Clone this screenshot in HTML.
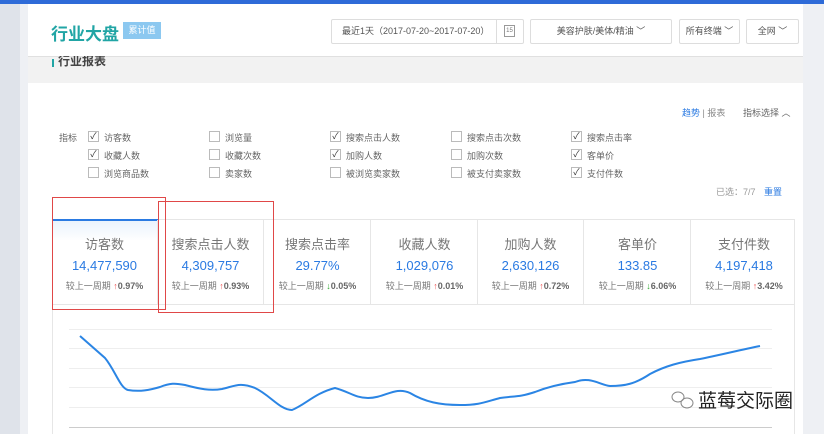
<!DOCTYPE html>
<html><head><meta charset="utf-8"><style>
*{margin:0;padding:0;box-sizing:border-box}
body{width:824px;height:434px;overflow:hidden;background:#fff;font-family:"Liberation Sans","Noto Sans CJK SC",sans-serif;position:relative;color:#666}
.a{position:absolute}
.cb{position:absolute;width:11px;height:11px;border:1px solid #bbb;background:#fff;font-size:9px;line-height:9px;text-align:center;color:#333}
.lb{position:absolute;font-size:9px;color:#666}
.card{position:absolute;top:220px;width:106px;height:84px;border-right:1px solid #e6e6e6;text-align:center}
.card .t{font-size:13px;color:#777;margin-top:14px}
.card .v{font-size:13px;color:#2a7ae2;margin-top:5px}
.card .c{font-size:9px;color:#777;margin-top:6px;white-space:nowrap}
.card .c b{color:#666}
.up{color:#e55;font-weight:bold}.dn{color:#3a3;font-weight:bold}
.sel{position:absolute;top:19px;height:25px;border:1px solid #ddd;border-radius:2px;font-size:9px;color:#555;line-height:23px;text-align:center;background:#fff}
</style></head><body>
<div class="a" style="left:0;top:0;width:20px;height:434px;background:#dfe3ea"></div>
<div class="a" style="left:20px;top:0;width:8px;height:434px;background:#eef0f4"></div>
<div class="a" style="left:803px;top:0;width:21px;height:434px;background:#eef0f4"></div>
<div class="a" style="left:0;top:0;width:824px;height:4px;background:#2e6bd8"></div>
<div class="a" style="left:28px;top:56px;width:775px;height:27px;background:#f2f2f2;border-top:1px solid #e0e0e0"></div>
<div class="a" style="left:52px;top:59px;width:2px;height:8px;background:#21a5a5"></div>
<div class="a" style="left:58px;top:52px;font-size:12px;color:#444;font-weight:bold">行业报表</div>
<div class="a" style="left:28px;top:4px;width:775px;height:52px;background:#fff"></div>
<div class="a" style="left:51px;top:20px;font-size:17px;color:#21a5a5;font-weight:bold">行业大盘</div>
<div class="a" style="left:118px;top:26px;width:0;height:0;border:5px solid transparent;border-right-color:#8cc8f0"></div>
<div class="a" style="left:123px;top:22px;width:38px;height:17px;background:#8cc8f0;color:#fff;font-size:9px;line-height:17px;text-align:center">累计值</div>
<div class="sel" style="left:331px;width:193px;text-align:left;padding-left:10px">最近1天（2017-07-20~2017-07-20）</div>
<div class="a" style="left:496px;top:19px;width:28px;height:25px;border-left:1px solid #ddd"></div>
<div class="a" style="left:504px;top:25px;width:11px;height:12px;border:1px solid #999;font-size:6px;line-height:10px;text-align:center;color:#777">15</div>
<div class="sel" style="left:530px;width:142px">美容护肤/美体/精油 ﹀</div>
<div class="sel" style="left:679px;width:61px">所有终端 ﹀</div>
<div class="sel" style="left:746px;width:53px">全网 ﹀</div>
<div class="a" style="left:682px;top:106px;font-size:9px;color:#2a7ae2">趋势 <span style="color:#888">| 报表</span></div>
<div class="a" style="left:743px;top:106px;font-size:9px;color:#666">指标选择 ︿</div>
<div class="lb" style="left:59px;top:131px">指标</div>
<div class="cb" style="left:88px;top:131px">✓</div><div class="lb" style="left:104px;top:131px">访客数</div>
<div class="cb" style="left:88px;top:149px">✓</div><div class="lb" style="left:104px;top:149px">收藏人数</div>
<div class="cb" style="left:88px;top:167px"></div><div class="lb" style="left:104px;top:167px">浏览商品数</div>
<div class="cb" style="left:209px;top:131px"></div><div class="lb" style="left:225px;top:131px">浏览量</div>
<div class="cb" style="left:209px;top:149px"></div><div class="lb" style="left:225px;top:149px">收藏次数</div>
<div class="cb" style="left:209px;top:167px"></div><div class="lb" style="left:225px;top:167px">卖家数</div>
<div class="cb" style="left:330px;top:131px">✓</div><div class="lb" style="left:346px;top:131px">搜索点击人数</div>
<div class="cb" style="left:330px;top:149px">✓</div><div class="lb" style="left:346px;top:149px">加购人数</div>
<div class="cb" style="left:330px;top:167px"></div><div class="lb" style="left:346px;top:167px">被浏览卖家数</div>
<div class="cb" style="left:451px;top:131px"></div><div class="lb" style="left:467px;top:131px">搜索点击次数</div>
<div class="cb" style="left:451px;top:149px"></div><div class="lb" style="left:467px;top:149px">加购次数</div>
<div class="cb" style="left:451px;top:167px"></div><div class="lb" style="left:467px;top:167px">被支付卖家数</div>
<div class="cb" style="left:571px;top:131px">✓</div><div class="lb" style="left:587px;top:131px">搜索点击率</div>
<div class="cb" style="left:571px;top:149px">✓</div><div class="lb" style="left:587px;top:149px">客单价</div>
<div class="cb" style="left:571px;top:167px">✓</div><div class="lb" style="left:587px;top:167px">支付件数</div>
<div class="lb" style="left:716px;top:185px;color:#999">已选：7/7 <span style="color:#2a7ae2;margin-left:6px">重置</span></div>
<div class="a" style="left:52px;top:219px;width:743px;height:215px;border:1px solid #e6e6e6;border-bottom:none"></div>
<div class="a" style="left:52px;top:219px;width:106px;height:2px;background:#2a7ae2"></div>
<div class="a" style="left:52px;top:221px;width:106px;height:20px;background:linear-gradient(#eaf3fd,#fff)"></div>
<div class="card" style="left:52px"><div class="t">访客数</div><div class="v">14,477,590</div><div class="c">较上一周期 <span class="up">↑</span><b>0.97%</b></div></div>
<div class="card" style="left:158px"><div class="t">搜索点击人数</div><div class="v">4,309,757</div><div class="c">较上一周期 <span class="up">↑</span><b>0.93%</b></div></div>
<div class="card" style="left:265px"><div class="t">搜索点击率</div><div class="v">29.77%</div><div class="c">较上一周期 <span class="dn">↓</span><b>0.05%</b></div></div>
<div class="card" style="left:372px"><div class="t">收藏人数</div><div class="v">1,029,076</div><div class="c">较上一周期 <span class="up">↑</span><b>0.01%</b></div></div>
<div class="card" style="left:478px"><div class="t">加购人数</div><div class="v">2,630,126</div><div class="c">较上一周期 <span class="up">↑</span><b>0.72%</b></div></div>
<div class="card" style="left:585px"><div class="t">客单价</div><div class="v">133.85</div><div class="c">较上一周期 <span class="dn">↓</span><b>6.06%</b></div></div>
<div class="card" style="left:691px;border-right:none"><div class="t">支付件数</div><div class="v">4,197,418</div><div class="c">较上一周期 <span class="up">↑</span><b>3.42%</b></div></div>
<div class="a" style="left:52px;top:304px;width:743px;height:1px;background:#e6e6e6"></div>
<svg class="a" style="left:0;top:0" width="824" height="434">
<g stroke="#eee" stroke-width="1"><line x1="69" y1="329.5" x2="772" y2="329.5"/><line x1="69" y1="348.5" x2="772" y2="348.5"/><line x1="69" y1="368.5" x2="772" y2="368.5"/><line x1="69" y1="387.5" x2="772" y2="387.5"/><line x1="69" y1="407.5" x2="772" y2="407.5"/></g>
<line x1="69" y1="427.5" x2="772" y2="427.5" stroke="#ccc"/>
<path d="M80,336 L105,358 C115,370 120,388 128,390 C140,392 150,390 160,387 C170,383 175,383 185,385 C200,389 210,391 222,389 C235,386 240,382 255,388 C270,395 280,410 292,410 C305,405 315,393 335,388 C350,392 355,398 368,398 C385,398 395,386 410,393 C425,402 440,405 460,405 C480,405 485,402 500,398 C515,396 520,397 535,392 C545,388 560,384 575,382 C590,376 600,385 610,386 C625,386 635,384 650,374 C665,366 680,362 700,359 C720,355 740,350 760,346" fill="none" stroke="#2b85e4" stroke-width="2"/>
<rect x="52.5" y="197.5" width="113" height="112" fill="none" stroke="#e04848"/>
<rect x="158.5" y="201.5" width="115" height="111" fill="none" stroke="#e04848"/>
<g fill="none" stroke="#888" stroke-width="1"><ellipse cx="678" cy="397" rx="6" ry="5"/><ellipse cx="687" cy="403" rx="6" ry="5"/></g>
</svg>
<div class="a" style="left:698px;top:386px;font-size:19px;color:#222">蓝莓交际圈</div>
</body></html>
